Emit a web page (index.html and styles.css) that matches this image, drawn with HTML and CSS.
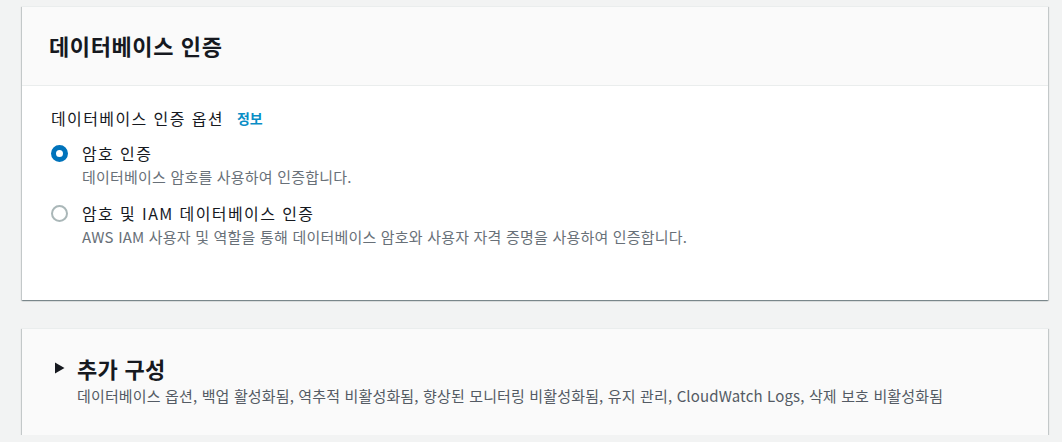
FILE: index.html
```html
<!DOCTYPE html>
<html lang="ko">
<head>
<meta charset="utf-8">
<link rel="stylesheet" href="styles.css">
</head>
<body>
<div class="page">
  <section class="card">
    <div class="card-header">
      <h2 class="card-title">데이터베이스 인증</h2>
    </div>
    <div class="card-body">
      <div class="field-label">데이터베이스 인증 옵션 <a class="info" href="#">정보</a></div>
      <div class="radio-group">
        <label class="radio-item">
          <span class="radio checked"></span>
          <span class="radio-text">
            <span class="radio-label">암호 인증</span>
            <span class="radio-desc">데이터베이스 암호를 사용하여 인증합니다.</span>
          </span>
        </label>
        <label class="radio-item">
          <span class="radio"></span>
          <span class="radio-text">
            <span class="radio-label">암호 및 IAM 데이터베이스 인증</span>
            <span class="radio-desc">AWS IAM 사용자 및 역할을 통해 데이터베이스 암호와 사용자 자격 증명을 사용하여 인증합니다.</span>
          </span>
        </label>
      </div>
    </div>
  </section>

  <section class="card expand">
    <div class="expand-head">
      <svg class="caret" width="11" height="12" viewBox="0 0 11 12"><path d="M1 0.5 L10.5 6 L1 11.5 Z" fill="#16191f"/></svg>
      <h2 class="expand-title">추가 구성</h2>
    </div>
    <div class="expand-desc">데이터베이스 옵션, 백업 활성화됨, 역추적 비활성화됨, 향상된 모니터링 비활성화됨, 유지 관리, CloudWatch Logs, 삭제 보호 비활성화됨</div>
  </section>
</div>
</body>
</html>
```

FILE: styles.css
```css
* { box-sizing: border-box; }
html, body {
  margin: 0;
  padding: 0;
  background: #f2f3f3;
}
body {
  font-family: "Noto Sans CJK KR", "Noto Sans", sans-serif;
  color: #16191f;
}
.page {
  padding: 6px 14px 0 22px;
  display: flex;
  flex-direction: column;
  gap: 28px;
}
.card {
  background: #ffffff;
  border-top: 1px solid #eaeded;
  box-shadow: 0 1px 1px 0 rgba(0, 28, 36, 0.3), 1px 1px 1px 0 rgba(0, 28, 36, 0.15), -1px 1px 1px 0 rgba(0, 28, 36, 0.15);
}
.card-header {
  background: #fafafa;
  border-bottom: 1px solid #eaeded;
  height: 79px;
  padding: 0 27px;
  display: flex;
  align-items: center;
}
.card-title {
  margin: 0;
  font-size: 22px;
  letter-spacing: 0.6px;
  font-weight: 700;
  line-height: 28px;
  padding-bottom: 2px;
}
.card-body {
  height: 214px;
  padding: 21px 29px 0 29px;
}
.field-label {
  font-size: 16px;
  letter-spacing: 1.4px;
  line-height: 22px;
  display: flex;
  align-items: center;
  gap: 13px;
}
.info {
  color: #0a8ec6;
  font-weight: 700;
  font-size: 14px;
  letter-spacing: 0;
  text-decoration: none;
}
.radio-group {
  margin-top: 12px;
  display: flex;
  flex-direction: column;
  gap: 12px;
}
.radio-item {
  display: flex;
  align-items: flex-start;
  gap: 14px;
}
.radio {
  width: 17px;
  height: 17px;
  border-radius: 50%;
  border: 2px solid #aab7b8;
  background: #fff;
  margin-top: 4px;
  flex: none;
}
.radio.checked {
  border: 5px solid #0073bb;
}
.radio-text {
  display: flex;
  flex-direction: column;
}
.radio-label {
  font-size: 16px;
  letter-spacing: 1.4px;
  line-height: 24px;
}
.radio-desc {
  font-size: 15px;
  letter-spacing: 0.2px;
  line-height: 24px;
  color: #687078;
}
.expand {
  background: #fafafa;
  padding: 25px 26px 27px 32px;
}
.expand-head {
  display: flex;
  align-items: center;
  gap: 12px;
}
.caret { flex: none; }
.expand-title {
  margin: 0;
  font-size: 22px;
  letter-spacing: 0.3px;
  font-weight: 700;
  line-height: 28px;
}
.expand-desc {
  margin-top: 2px;
  margin-left: 23px;
  font-size: 15px;
  letter-spacing: 0.15px;
  line-height: 24px;
  color: #545b64;
}
```
